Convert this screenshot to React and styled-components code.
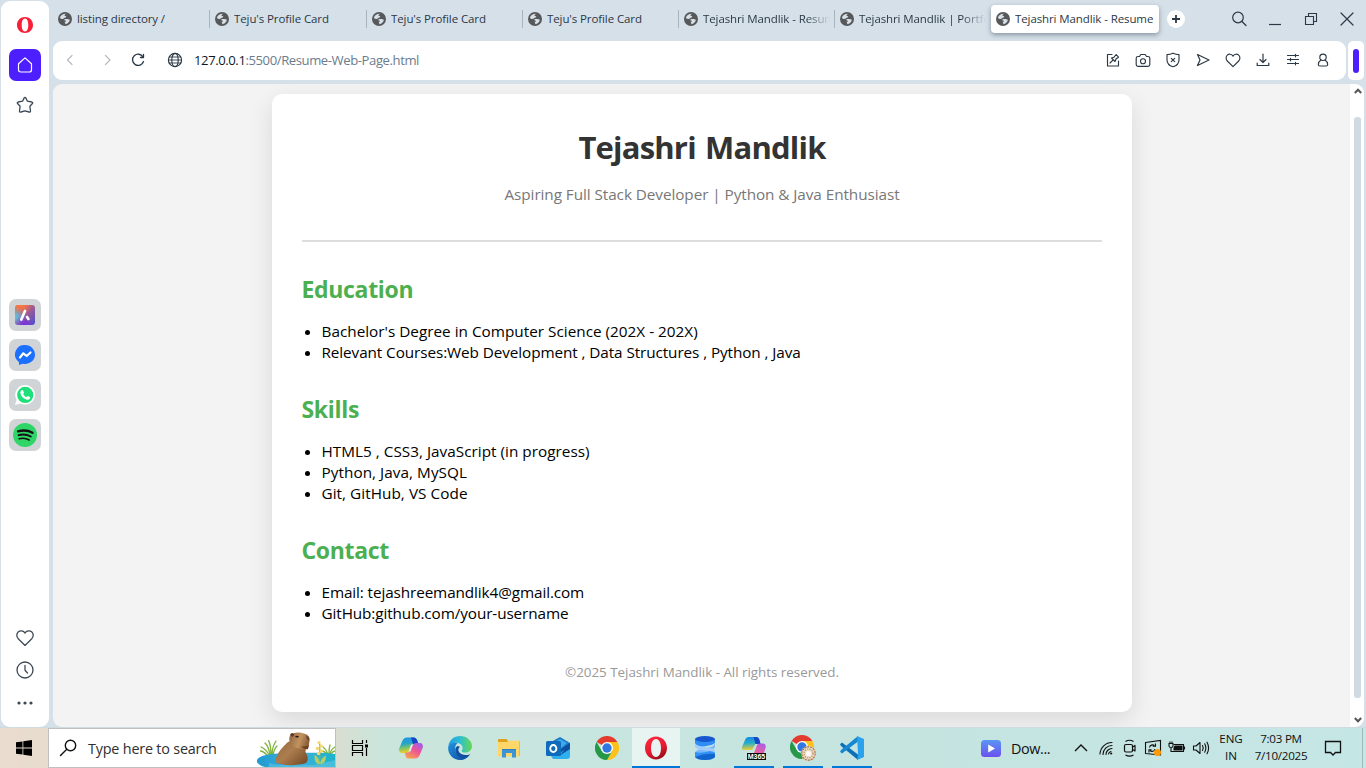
import React from 'react';
import styled, { createGlobalStyle, css } from 'styled-components';

const Global = createGlobalStyle`
  *, *::before, *::after { box-sizing: border-box; }
  html, body { margin: 0; padding: 0; }
  body {
    font-family: 'Open Sans', 'Noto Sans', sans-serif;
    overflow: hidden;
  }
  svg { display: block; flex: none; }
`;

const Desktop = styled.div`
  width: 1366px;
  height: 768px;
  display: flex;
  flex-direction: column;
  overflow: hidden;
`;

/* ---------- Browser shell ---------- */

const Browser = styled.div`
  height: 727px;
  flex: none;
  display: flex;
  background: #d6e0e9;
`;

const Sidebar = styled.nav`
  width: 48px;
  margin: 1px 4px 0 1px;
  padding: 8px 0 14px;
  display: flex;
  flex-direction: column;
  align-items: center;
  justify-content: space-between;
  background: #fff;
  border-radius: 9px;
  color: #3c4955;
`;

const SideGroup = styled.div`
  display: flex;
  flex-direction: column;
  gap: ${(p) => p.$gap || 8}px;
`;

const SideButton = styled.div`
  width: 32px;
  height: ${(p) => p.$h || 32}px;
  border-radius: 7px;
  display: flex;
  align-items: center;
  justify-content: center;
  background: ${(p) => p.$bg || 'transparent'};
`;

const Main = styled.div`
  flex: 1;
  min-width: 0;
  display: flex;
  flex-direction: column;
`;

const TabStrip = styled.div`
  height: 41px;
  display: flex;
  align-items: flex-start;
  padding-top: 5px;
  color: #2b3845;
`;

const Tab = styled.div`
  width: ${(p) => p.$w}px;
  height: 28px;
  display: flex;
  align-items: center;
  gap: 5px;
  padding: 0 5px;
  font-size: 11.5px;
  letter-spacing: -0.1px;
  white-space: nowrap;
  ${(p) => p.$active && css`
    width: 168px;
    margin-left: 1px;
    background: #fff;
    border-radius: 4px;
    box-shadow: 0 2px 5px rgba(40, 55, 70, 0.45);
  `}
`;

const TabTitle = styled.span`
  flex: 1;
  overflow: hidden;
  padding-bottom: 2px;
  ${(p) => p.$fade && css`
    margin-right: -1px;
    mask-image: linear-gradient(to right, #000 calc(100% - 24px), transparent);
  `}
`;

const TabDivider = styled.span`
  width: 1px;
  height: 18px;
  margin-top: 5px;
  background: #a9b3bc;
`;

const NewTab = styled.div`
  width: 18px;
  height: 18px;
  margin: 5px 0 0 8px;
  border-radius: 50%;
  background: #fff;
  display: flex;
  align-items: center;
  justify-content: center;
`;

const WindowControls = styled.div`
  margin-left: auto;
  padding: 0 11px 0 0;
  height: 28px;
  display: flex;
  align-items: center;
  gap: 20px;
`;

const BarRow = styled.div`
  height: 39px;
  display: flex;
  margin-bottom: 4px;
`;

const AddressBar = styled.div`
  width: 1293px;
  background: #fff;
  border-radius: 9px;
  display: flex;
  align-items: center;
  padding: 0 14px 1px 8px;
  color: #2b3845;
`;

const NavButtons = styled.div`
  display: grid;
  grid-template-columns: 38px 31px 37px 18px;
`;

const Url = styled.div`
  margin-left: 9px;
  font-size: 13.1px;
  letter-spacing: -0.42px;
  color: #6b7c8d;
  b { font-weight: 400; color: #10181f; }
`;

const BarTools = styled.div`
  margin-left: auto;
  display: flex;
  gap: 12px;
`;

const PanelToggle = styled.div`
  width: 16px;
  margin-left: 2px;
  border-radius: 5px;
  background: #fff;
  display: flex;
  align-items: center;
  justify-content: center;
  &::after {
    content: '';
    width: 6px;
    height: 24px;
    border-radius: 3px;
    background: #4d1fff;
  }
`;

const Viewport = styled.div`
  flex: 1;
  display: flex;
  width: 1311px;
  border-radius: 9px;
  overflow: hidden;
  background: #f3f3f3;
`;

const Page = styled.main`
  flex: 1;
  padding: 10px 0 0 1px;
  display: flex;
  justify-content: center;
  align-items: flex-start;
  overflow: hidden;
`;

const Scrollbar = styled.div`
  width: 14px;
  background: #fff;
  display: flex;
  flex-direction: column;
  align-items: center;
  justify-content: space-between;
  padding: 4px 0 4px 1px;
`;

const ScrollThumb = styled.div`
  width: 7px;
  height: 581px;
  margin-top: 23px;
  margin-bottom: auto;
  border-radius: 3px;
  background: #d0dae3;
`;

/* ---------- Résumé page ---------- */

const Card = styled.article`
  width: 860px;
  height: 618px;
  padding: 30px;
  border-radius: 10px;
  background: #fff;
  box-shadow: 0 8px 25px rgba(0, 0, 0, 0.11);
`;

const CardHeader = styled.header`
  height: 118px;
  border-bottom: 2px solid #ddd;
  text-align: center;
  margin-bottom: 31px;
`;

const Name = styled.h1`
  margin: 0;
  padding-top: 2px;
  font-size: 31px;
  line-height: 43px;
  letter-spacing: -0.8px;
  word-spacing: 2px;
  color: #333;
`;

const Tagline = styled.p`
  margin: 15px 0 0;
  font-size: 15.3px;
  line-height: 21px;
  letter-spacing: -0.065px;
  color: #777;
`;

const Section = styled.section`
  margin-bottom: 30px;
`;

const SectionTitle = styled.h2`
  margin: 0 0 16px -0.5px;
  font-size: 23px;
  line-height: 32px;
  letter-spacing: -0.32px;
  color: #4caf50;
`;

const List = styled.ul`
  margin: 0;
  padding-left: 19.5px;
  font-size: 15.3px;
  line-height: 21px;
  color: #000;
`;

const Item = styled.li`
  letter-spacing: ${(p) => p.$ls || 0}px;
`;

const CardFooter = styled.footer`
  margin-top: 39px;
  text-align: center;
  font-size: 13.4px;
  line-height: 19px;
  letter-spacing: -0.02px;
  color: #999;
`;

/* ---------- Taskbar ---------- */

const Taskbar = styled.div`
  height: 41px;
  display: flex;
  border-top: 1px solid #cfdcdf;
  background: linear-gradient(to right, #ebdccf 0, #e6dccd 48px, #d9ddd0 336px, #cae5db 380px, #c7e6df 560px, #c5e4e0 900px, #c4e6e5 1366px);
`;

const Start = styled.div`
  width: 48px;
  display: flex;
  align-items: center;
  justify-content: center;
`;

const SearchBox = styled.div`
  width: 288px;
  border: 1px solid #bfc1c1;
  background: #fff;
  display: flex;
  align-items: center;
  padding-left: 10px;
  gap: 11px;
  font-size: 14.4px;
  letter-spacing: -0.2px;
  color: #303030;
  overflow: hidden;
  svg:last-child { margin-left: auto; }
`;

const Apps = styled.div`
  display: flex;
  padding-left: 3px;
`;

const AppButton = styled.div`
  width: 49px;
  padding: ${(p) => (p.$active ? '0' : '0 5px 0 4px')};
  display: flex;
  position: relative;
  align-items: center;
  justify-content: center;
  ${(p) => p.$active && css`background: #e8f4f2; width: 48px; margin-right: 1px;`}
  &::after {
    content: '';
    display: ${(p) => (p.$active || p.$running ? 'block' : 'none')};
    position: absolute;
    bottom: 0;
    left: ${(p) => (p.$active ? 0 : 4)}px;
    width: ${(p) => (p.$active ? 48 : 40)}px;
    height: 2px;
    background: #0078d7;
  }
`;

const TaskView = styled(Start)``;

const Tray = styled.div`
  margin-left: auto;
  display: flex;
  align-items: center;
  color: #111;
`;

const MediaItem = styled.div`
  display: flex;
  align-items: center;
  gap: 10px;
  font-size: 14.4px;
  letter-spacing: -0.4px;
  margin-right: 21px;
  width: 69px;
  white-space: nowrap;
`;

const TrayIcons = styled.div`
  display: flex;
  gap: 4px;
`;

const Stack = styled.div`
  width: ${(p) => p.$w}px;
  margin-left: ${(p) => p.$ml}px;
  font-size: 11.6px;
  line-height: 17.5px;
  padding-bottom: 2px;
  letter-spacing: ${(p) => p.$ls || 0}px;
  text-align: center;
  white-space: nowrap;
`;

const Notice = styled.div`
  width: 48px;
  margin-left: -2px;
  display: flex;
  justify-content: center;
`;

const ShowDesktop = styled.div`
  width: 4px;
  align-self: stretch;
  margin-left: 5px;
  border-left: 1px solid #9dbab9;
`;

/* ---------- Icons ---------- */

const Line = ({ s = 16, w = 1.2, vb = 16, children, ...rest }) => (
  <svg width={s} height={s} viewBox={`0 0 ${vb} ${vb}`} fill="none" stroke="currentColor" strokeWidth={w} strokeLinecap="round" strokeLinejoin="round" {...rest}>
    {children}
  </svg>
);

const TabGlobe = () => (
  <svg width="14" height="14" viewBox="0 0 14 14">
    <circle cx="7" cy="7" r="7" fill="#56585a" />
    <path d="M2 5.3C2.6 3.5 4 2.3 5.9 1.9L8.2 1.8C7 2.5 6.4 3 6.5 3.7L8 4.2C8.6 4.6 8.1 5.3 7.4 5.4L6.3 6.1L4.9 7L2.6 6.7Z" fill="#d9e1e8" />
    <path d="M6.6 7.1H9.3C10.1 7.2 10.6 7.7 11.6 7.6C12.1 8.6 11 10.5 9.4 11.4L7.2 12.2C7.5 11 6.7 10.7 6.5 9.8C7.6 9.5 8.4 9.3 7.9 8.7L6.4 8.3Z" fill="#d9e1e8" />
  </svg>
);

const OperaMark = () => (
  <svg width="16" height="16" viewBox="0 0 16 16">
    <path fillRule="evenodd" fill="#fa1e36" d="M8 0C12.5 0 16 3.5 16 8S12.5 16 8 16 0 12.5 0 8 3.5 0 8 0ZM8 1.5C5.9 1.5 4.7 4.3 4.7 8S5.9 14.5 8 14.5 11.3 11.7 11.3 8 10.1 1.5 8 1.5Z" />
  </svg>
);

const HeartLine = ({ s = 16, w = 1.1 }) => (
  <Line s={s} w={w}>
    <path d="M8 14.6 2 8.7C.3 6.9.3 4.2 1.9 2.7 3.6 1.1 6.3 1.3 7.6 3.1L8 3.7 8.4 3.1C9.7 1.3 12.4 1.1 14.1 2.7 15.7 4.2 15.7 6.9 14 8.7Z" />
  </Line>
);

const Aria = () => (
  <svg width="20" height="20" viewBox="0 0 20 20">
    <defs>
      <linearGradient id="ar1" x1="0" y1="0" x2="1" y2="1">
        <stop offset="0" stopColor="#f2784b" /><stop offset=".35" stopColor="#b8607e" /><stop offset="1" stopColor="#4b4fd0" />
      </linearGradient>
      <radialGradient id="ar2" cx="0" cy=".6" r=".55">
        <stop offset="0" stopColor="#55c8e8" /><stop offset="1" stopColor="#55c8e8" stopOpacity="0" />
      </radialGradient>
      <radialGradient id="ar3" cx=".45" cy="1" r=".5">
        <stop offset="0" stopColor="#7a2fe0" /><stop offset="1" stopColor="#7a2fe0" stopOpacity="0" />
      </radialGradient>
      <radialGradient id="ar4" cx=".35" cy="0" r=".5">
        <stop offset="0" stopColor="#ff7a3c" /><stop offset="1" stopColor="#ff7a3c" stopOpacity="0" />
      </radialGradient>
    </defs>
    <rect width="20" height="20" rx="3" fill="url(#ar1)" />
    <rect width="20" height="20" rx="3" fill="url(#ar2)" />
    <rect width="20" height="20" rx="3" fill="url(#ar3)" />
    <rect width="20" height="20" rx="3" fill="url(#ar4)" />
    <path d="M6.3 14.5 10 6M12 12l1.4 2" stroke="#fff" strokeWidth="2.7" strokeLinecap="round" />
  </svg>
);

const Messenger = () => (
  <svg width="20" height="20" viewBox="0 0 20 20">
    <path fill="#1c70ff" d="M10 0a10 9.5 0 1 1-2.5 18.7L4 20V17.2A9.5 9.5 0 0 1 10 0Z" />
    <path d="M5 12.5 8.3 8.3 11.7 11 15.5 7.5" stroke="#fff" strokeWidth="2.2" fill="none" strokeLinecap="round" strokeLinejoin="round" />
  </svg>
);

const WhatsApp = () => (
  <svg width="20" height="20" viewBox="0 0 20 20">
    <path fill="#fff" d="M10.2 0a9.8 9.8 0 1 1-4.7 18.4L0 20l1.6-5.3A9.8 9.8 0 0 1 10.2 0Z" />
    <circle cx="10.2" cy="9.9" r="8.1" fill="#1ee07a" />
    <path fill="#fff" d="M6.3 5.6c.5-.7 1.5-.7 1.8 0l.8 1.8c.2.6-.6 1.1-.7 1.5.7 1.5 1.9 2.6 3.4 3.2.5-.2.8-1.2 1.4-1l1.9 1c.5.3.2 1.4-.3 1.9-.8.8-2 .9-3.3.5-3-.9-5.5-3.5-5.9-6.3-.1-1 .3-2 .9-2.6Z" />
  </svg>
);

const Spotify = () => (
  <svg width="24" height="24" viewBox="0 0 24 24">
    <circle cx="12" cy="12" r="12" fill="#2fd566" />
    <g fill="none" stroke="#111" strokeLinecap="round">
      <path d="M5 8.3c5-1.3 10.5-.9 14.5 1.5" strokeWidth="2.3" />
      <path d="M5.6 12.2c4.3-1.2 8.5-.7 12.2 1.3" strokeWidth="1.9" />
      <path d="M6.2 15.8c3.5-1 7-.6 10 1.2" strokeWidth="1.6" />
    </g>
  </svg>
);

const Windows = () => (
  <svg width="16" height="16" viewBox="0 0 16 16">
    <path d="M0 2.3 6.5 1.4V7.6H0ZM7.3 1.3 16 0V7.6H7.3ZM0 8.4H6.5V14.6L0 13.7ZM7.3 8.4H16V16L7.3 14.7Z" fill="#000" />
  </svg>
);

const Capybara = () => (
  <svg width="78" height="38" viewBox="0 0 78 38">
    <defs>
      <linearGradient id="cw" x1="0" x2="1"><stop offset="0" stopColor="#1f9bd0" /><stop offset=".5" stopColor="#3fb0de" /><stop offset="1" stopColor="#1db2cc" /></linearGradient>
      <linearGradient id="cb" x1="0" y1="0" x2="1" y2=".8"><stop offset="0" stopColor="#94683f" /><stop offset=".5" stopColor="#ac7d4e" /><stop offset="1" stopColor="#7a4f2a" /></linearGradient>
      <linearGradient id="ch" x1="0" y1="0" x2="1" y2=".3"><stop offset="0" stopColor="#8f6240" /><stop offset=".6" stopColor="#c1935f" /><stop offset="1" stopColor="#8d5f3a" /></linearGradient>
    </defs>
    <g fill="none" stroke="#7fb23e" strokeWidth="1.3" strokeLinecap="round">
      <path d="M13 26Q12 18 8 14M14 26Q14 16 11.5 11.5M15 26Q15 18 19 12M12 26Q9 20 4 18M16 26Q17 20 20 17M10 26Q6 22 3.5 22" />
      <path d="M71 25Q69 20 66 18M72 25Q72 19 73 16M73 25Q74 20 78 18M70 25Q67 22 65 22M74 25Q76 22 78 22" />
    </g>
    <path d="M0 31C2 26 14 24.5 26 24.5 46 24 68 23 78 25V38H8C3 37-1 34 0 31Z" fill="url(#cw)" />
    <path d="M12 34c8 3 45 4 58-1l8-2v7H12Z" fill="#6fcbe6" opacity=".5" />
    <path d="M18 33C19 27 22 22 26 18 30 14 31 12 35 12L49 17 48.5 23C51 27 51.5 31 49 34 40 37 25 37 18 33Z" fill="url(#cb)" />
    <path d="M32.5 8C33 5.500 34 5 36 4.5 40 3 44 3.5 47 4.5 51 5.500 53 8 52.5 12L51.5 18C50.5 21 46 21 42 19.500 36 18 31 14 32.5 8Z" fill="url(#ch)" />
    <path d="M44 17Q48 18.5 51.8 16L51 20Q47 21 44 17Z" fill="#6b3f22" />
    <path d="M33 5.500Q35 2.500 37.5 5.500L35.5 8Z" fill="#5d3b22" />
    <path d="M38.5 8Q40 7 41.5 8.2" stroke="#24160d" strokeWidth="1.5" fill="none" />
    <path d="M49 6.500Q53 7 52.3 11.500L50 10.5Z" fill="#6a4930" />
    <path d="M62 36Q63.5 26 62.5 14" stroke="#86b155" strokeWidth="1.2" fill="none" />
    <g fill="#f7d76d"><circle cx="62" cy="13.5" r="1.6" /><circle cx="64" cy="17" r="1.8" /><circle cx="60.5" cy="19.5" r="1.8" /><circle cx="64.5" cy="22" r="1.7" /><circle cx="61.5" cy="24.5" r="1.7" /></g>
    <path d="M57.5 26Q62 28 63 35 57 35.5 57.5 26ZM69 26.5Q63.5 29 63 35 69 35 69 26.5Z" fill="#b3cf64" />
  </svg>
);

const Copilot = () => (
  <svg width="24" height="22" viewBox="0 0 24 22">
    <defs>
      <linearGradient id="cp1" x1="0" y1="0" x2=".2" y2="1"><stop offset="0" stopColor="#1d8fe8" /><stop offset=".45" stopColor="#28a6c8" /><stop offset=".7" stopColor="#7ac46a" /><stop offset="1" stopColor="#f4cc22" /></linearGradient>
      <linearGradient id="cp2" x1=".8" y1="0" x2=".2" y2="1"><stop offset="0" stopColor="#a25de8" /><stop offset=".45" stopColor="#ee5596" /><stop offset="1" stopColor="#f9a04d" /></linearGradient>
    </defs>
    <path d="M8 .5H15Q17 .5 18 3L19.5 7H14L10 14Q9 16 6.5 16H3Q-.5 15.5.2 11.5L3.5 3.5Q5 .5 8 .5Z" fill="url(#cp1)" />
    <path d="M12 .5H15Q17 .5 18 3L19.5 7H14Z" fill="#1746c8" />
    <path d="M16 21.5H9Q7 21.5 6.5 18.5L6 15.5H9.5L13.5 8.5Q14.5 6 17 6H21Q24.5 6.5 23.8 10.5L20.5 18.5Q19 21.5 16 21.5Z" fill="url(#cp2)" />
    <path d="M12 7.5h2L11.5 14.5H9.5Z" fill="#d9f0ec" />
  </svg>
);

const Edge = () => (
  <svg width="24" height="24" viewBox="0 0 24 24">
    <defs>
      <linearGradient id="e1" x1="0" y1=".5" x2="1" y2=".5"><stop offset="0" stopColor="#1c9be0" /><stop offset=".5" stopColor="#2fc0d0" /><stop offset="1" stopColor="#68d84e" /></linearGradient>
      <linearGradient id="e2" x1="0" y1="0" x2="1" y2="1"><stop offset="0" stopColor="#2290df" /><stop offset="1" stopColor="#0b4a9c" /></linearGradient>
    </defs>
    <path d="M.3 10C1.5 4 6 0 12 0c7 0 12 5 12 10 0 4-3 6.5-6.5 6.5-3 0-4.2-1.2-3.6-2.1C16 11 13.5 8 10 7 6 6 1.5 8 .3 10Z" fill="url(#e1)" />
    <path d="M.2 11C1 7.5 6 6.2 9.5 7.2 6.5 9 6.3 15 9 18.3 12 22 18 21 22 18.2 20 22 16 24 12 24 5 24-.5 18 .2 11Z" fill="url(#e2)" />
    <path d="M9.5 10C5.5 12 7 19.5 13 21.5 17 22.5 20.5 20 22 18.2 18 20 12 19 10.5 15 10 13 10.8 11.5 12 10.7Z" fill="#134f9f" />
  </svg>
);

const Folder = () => (
  <svg width="22" height="19" viewBox="0 0 22 19">
    <path d="M0 1Q0 0 1 0H8.5L10 2H21Q22 2 22 3V17H0Z" fill="#e0a21b" />
    <path d="M0 3H9L10.5 1.8H21.5V17.5H0Z" fill="#ffd768" />
    <path d="M4 10H18V18.5H14V14H8V18.5H4Z" fill="#3c93d5" />
    <path d="M4 10H18V11H4Z" fill="#2f7fc0" />
  </svg>
);

const Outlook = () => (
  <svg width="24" height="22" viewBox="0 0 24 22">
    <path d="M5 5 14 0 24 6V12L5 14Z" fill="#1878ca" />
    <path d="M8 5.5 14 2 21 6 14 12Z" fill="#3fa8ea" />
    <path d="M24 7V19Q24 22 21 22H7L5 19Z" fill="#2fb0ee" />
    <path d="M24 7V12L13 19 24 7ZM15 12 24 6V9L14 16Z" fill="#0b4f9e" />
    <rect y="4" width="15" height="15" rx="1.5" fill="#0f6cbd" />
    <ellipse cx="7.3" cy="11.5" rx="3.1" ry="3.5" fill="none" stroke="#fff" strokeWidth="1.9" />
  </svg>
);

const Chrome = ({ s = 24, badge }) => (
  <svg width={badge ? 26 : s} height={badge ? 26 : s} viewBox={badge ? '0 0 26 26' : '0 0 24 24'}>
    <path d="M12 12 1.6 6A12 12 0 0 1 22.4 6Z" fill="#e33b2e" />
    <path d="M12 12V6H22.4A12 12 0 0 1 12 24L17.2 15Z" fill="#fcc21b" />
    <path d="M12 12 17.2 15 12 24A12 12 0 0 1 1.6 6L6.8 15Z" fill="#279847" />
    <circle cx="12" cy="12" r="6" fill="#fff" />
    <circle cx="12" cy="12" r="4.7" fill="#2f78e4" />
    {badge && (
      <g>
        <circle cx="18.5" cy="18.5" r="7.4" fill="#ecdcc8" />
        <circle cx="18.5" cy="18.5" r="6.7" fill="none" stroke="#a87748" strokeWidth="1.2" strokeDasharray="2.2 .8" />
        <circle cx="18.5" cy="18.5" r="4.5" fill="none" stroke="#b98a60" strokeWidth="1.2" strokeDasharray="1.2 1.2" />
        <circle cx="18.5" cy="18.5" r="2.6" fill="#fffaf3" />
      </g>
    )}
  </svg>
);

const OperaApp = () => (
  <svg width="24" height="24" viewBox="0 0 24 24">
    <defs>
      <linearGradient id="oa" x1=".2" y1="0" x2=".7" y2="1"><stop offset="0" stopColor="#ff2940" /><stop offset=".6" stopColor="#e11a2f" /><stop offset="1" stopColor="#8e0d15" /></linearGradient>
    </defs>
    <path fillRule="evenodd" fill="url(#oa)" d="M12 .5C18.2 .5 23 5.5 23 12S18.2 23.5 12 23.5 1 18.5 1 12 5.8.5 12 .5ZM12 3C8.8 3 7 7 7 12S8.8 21 12 21 17 17 17 12 15.2 3 12 3Z" />
  </svg>
);

const SqlApp = () => (
  <svg width="20" height="24" viewBox="0 0 20 24">
    <path d="M0 3V8Q1.5 10 6 11L14 9.5Q19 8.5 20 6.5V3Z" fill="#2f8df5" />
    <path d="M0 21V16.5Q1 14 6 13L14 11.5Q19 10.5 20 7V11Q19 13.500 14 14.500Z" fill="#7db8fc" />
    <path d="M0 7V10.500Q1 13 7 14L14 15Q19 16 20 18V14.500Q19 12.500 13 11.500L6 10.300Q1 9.500 0 7Z" fill="#a3cdfd" />
    <path d="M0 16V21Q2 24 10 24 18 24 20 21V17Q19 15.500 14 15Q6 18 0 16Z" fill="#2f92f5" />
    <path d="M0 21Q10 17 20 18V21Q17 24 10 24 3 24 0 21Z" fill="#1264ce" />
    <ellipse cx="10" cy="3" rx="10" ry="3" fill="#1757d0" />
  </svg>
);

const M365 = () => (
  <svg width="26" height="24" viewBox="0 0 26 24">
    <defs>
      <linearGradient id="m1" x1="0" y1="0" x2=".1" y2="1"><stop offset="0" stopColor="#1687e4" /><stop offset=".5" stopColor="#26aecb" /><stop offset="1" stopColor="#e8cc37" /></linearGradient>
      <linearGradient id="m2" x1=".8" y1="0" x2=".2" y2="1"><stop offset="0" stopColor="#a85ce9" /><stop offset="1" stopColor="#f5609b" /></linearGradient>
    </defs>
    <path d="M8 1H15Q17.5 1 18.5 4L19.5 8H14.5L11 14H3Q0 13.5 1 11L4 4Q5 1 8 1Z" fill="url(#m1)" />
    <path d="M12.5 1H15Q17.5 1 18.5 4L19.5 8H14.5Z" fill="#1746c8" />
    <path d="M13 17 16 9Q16.7 7.5 18.5 7.5H22Q25.5 8 24.5 12L23 17Z" fill="url(#m2)" />
    <rect x="6" y="17" width="19" height="7" fill="#0a0a0a" />
    <text x="15.5" y="23" fontFamily="Liberation Sans, sans-serif" fontSize="7" fontWeight="700" fill="#fff" textAnchor="middle">M365</text>
  </svg>
);

const VsCode = () => (
  <svg width="24" height="24" viewBox="0 0 24 24">
    <path d="M0 8.3 2 6.5 18 18.5V24L1 10Z" fill="#0d6fb8" />
    <path d="M0 15.7 2 17.5 18 5.5V0L1 14Z" fill="#1687d2" />
    <path d="M17 0 24 3V21L17 24 18 18Z" fill="#2ba2ee" />
  </svg>
);

const tabs = [
  { title: 'listing directory /', w: 156 },
  { title: "Teju's Profile Card", w: 156 },
  { title: "Teju's Profile Card", w: 155 },
  { title: "Teju's Profile Card", w: 155 },
  { title: 'Tejashri Mandlik - Resume', w: 155, fade: true },
  { title: 'Tejashri Mandlik | Portfolio', w: 155, fade: true },
];

const sections = [
  {
    title: 'Education',
    items: [
      { text: "Bachelor's Degree in Computer Science (202X - 202X)", ls: 0.01 },
      { text: 'Relevant Courses:Web Development , Data Structures , Python , Java', ls: -0.09 },
    ],
  },
  {
    title: 'Skills',
    items: [
      { text: 'HTML5 , CSS3, JavaScript (in progress)', ls: 0.02 },
      { text: 'Python, Java, MySQL', ls: 0.05 },
      { text: 'Git, GitHub, VS Code', ls: 0.05 },
    ],
  },
  {
    title: 'Contact',
    items: [
      { text: 'Email: tejashreemandlik4@gmail.com', ls: -0.11 },
      { text: 'GitHub:github.com/your-username', ls: -0.1 },
    ],
  },
];

const apps = [
  { icon: <Copilot /> }, { icon: <Edge /> }, { icon: <Folder /> }, { icon: <Outlook /> }, { icon: <Chrome /> },
  { icon: <OperaApp />, active: true }, { icon: <SqlApp /> }, { icon: <M365 />, running: true },
  { icon: <Chrome badge />, running: true }, { icon: <VsCode />, running: true },
];

export default function App() {
  return (
    <Desktop>
      <Global />
      <Browser>
        <Sidebar>
          <SideGroup>
            <SideButton><OperaMark /></SideButton>
            <SideButton $bg="#4d1fff">
              <Line w={1.2} color="#fff"><path d="M1.5 6.8 8 .9 14.5 6.8V12.7Q14.5 15 12.2 15H3.8Q1.5 15 1.5 12.7Z" /></Line>
            </SideButton>
            <SideButton>
              <Line s={18} vb={18} w={1.3}><path d="M9 1.3Q9.5 1.3 9.8 1.9L11.4 5.2 15.9 6Q17.3 6.5 16.4 7.5L13.9 10.3 14.5 15Q14.5 16.5 13 16L9 14.9 5 16Q3.5 16.5 3.5 15L4.1 10.3 1.6 7.5Q.7 6.5 2.1 6L6.6 5.2 8.2 1.9Q8.5 1.3 9 1.3Z" /></Line>
            </SideButton>
          </SideGroup>
          <SideGroup>
            <SideButton $bg="#d0d4d7"><Aria /></SideButton>
            <SideButton $bg="#d0d4d7"><Messenger /></SideButton>
            <SideButton $bg="#d0d4d7"><WhatsApp /></SideButton>
            <SideButton $bg="#d0d4d7"><Spotify /></SideButton>
          </SideGroup>
          <SideGroup $gap={14}>
            <SideButton $h={18}><HeartLine s={18} w={1.15} /></SideButton>
            <SideButton $h={18}><Line s={18} vb={18} w={1.3}><circle cx="9" cy="9" r="8" /><path d="M9 4.5V9.3L11.5 12" /></Line></SideButton>
            <SideButton $h={20}><svg width="16" height="4" viewBox="0 0 16 4" fill="currentColor"><circle cx="2" cy="2" r="1.6" /><circle cx="8" cy="2" r="1.6" /><circle cx="14" cy="2" r="1.6" /></svg></SideButton>
          </SideGroup>
        </Sidebar>

        <Main>
          <TabStrip>
            {tabs.map((t, i) => (
              <React.Fragment key={i}>
                {i > 0 && <TabDivider />}
                <Tab $w={t.w}><TabGlobe /><TabTitle $fade={t.fade}>{t.title}</TabTitle></Tab>
              </React.Fragment>
            ))}
            <Tab $active><TabGlobe /><TabTitle>Tejashri Mandlik - Resume</TabTitle></Tab>
            <NewTab><Line s={8} vb={8} w={1.8} strokeLinecap="butt"><path d="M4 0V8M0 4H8" /></Line></NewTab>
            <WindowControls>
              <Line w={1.2}><circle cx="7" cy="6.5" r="5.3" /><path d="M11 10.5 15 14.5" /></Line>
              <Line w={1.2} strokeLinecap="butt"><path d="M2 13.5H14" /></Line>
              <Line w={1.1} strokeLinejoin="miter"><path d="M2.5 5.5H10.5V13.5H2.5ZM5.5 5.5V2.5H13.5V10.5H10.5" /></Line>
              <Line w={1.2}><path d="M2 2 14 14M14 2 2 14" /></Line>
            </WindowControls>
          </TabStrip>

          <BarRow>
            <AddressBar>
              <NavButtons>
                <Line color="#b6bbc0" w={1.2}><path d="M11 3.5 6.5 8 11 12.5" /></Line>
                <Line color="#b6bbc0" w={1.2}><path d="M6.5 3.5 11 8 6.5 12.5" /></Line>
                <Line w={1.3}><path d="M13 5A5.6 5.6 0 1 0 13.5 9.5M13.5 2.5V5.5H10.5" /></Line>
                <Line w={1.15}><circle cx="8" cy="8" r="6.6" /><ellipse cx="8" cy="8" rx="3.2" ry="6.6" /><path d="M2.2 5H13.8M2.2 11H13.8M1.4 8H14.6" strokeWidth=".9" /></Line>
              </NavButtons>
              <Url><b>127.0.0.1</b>:5500/Resume-Web-Page.html</Url>
              <BarTools>
                <Line s={18} vb={18} w={1.15}><path d="M8 3.5H3.5V15H14.5V10M6 12 9.2 8.8M7.5 7 11 10.5 12 8 14.5 6.2 12.2 3.5 10 6.2Z" /></Line>
                <Line s={18} vb={18} w={1.15}><path d="M4 5.5H5.5L6.8 3.5H11.2L12.5 5.5H14Q15.8 5.5 15.8 7.3V13.5Q15.8 15.3 14 15.3H4Q2.2 15.3 2.2 13.5V7.3Q2.2 5.5 4 5.5Z" /><circle cx="9" cy="10.2" r="2.5" /></Line>
                <Line s={18} vb={18} w={1.15}><path d="M9 2.2C11 3.2 13 3.6 15 3.6V9C15 12.3 12.5 14.7 9 15.8 5.5 14.7 3 12.3 3 9V3.6C5 3.6 7 3.2 9 2.2ZM7.3 7.3 10.7 10.7M10.7 7.3 7.3 10.7" /></Line>
                <Line s={18} vb={18} w={1.2}><path d="M3.5 3.5 15 9 3.5 14.5 6 9Z" /></Line>
                <Line s={18} vb={18} w={1.15}><path d="M9 15.6 3.3 10C1.7 8.4 1.7 5.700 3.300 4.200 4.900 2.700 7.400 2.900 8.600 4.600L9 5.200 9.400 4.600C10.600 2.900 13.100 2.700 14.700 4.200 16.300 5.700 16.300 8.400 14.700 10Z" /></Line>
                <Line s={18} vb={18} w={1.2}><path d="M9 3V11M6 8.5 9 11.5 12 8.5M3.2 12V14.5H14.8V12" /></Line>
                <Line s={18} vb={18} w={1.15}><path d="M3.5 4.5H14.5M3.5 8.5H14.5M3.5 12.5H14.5M11.5 3.2V5.8M6.5 7.2V9.8M11.5 11.2V13.8" /></Line>
                <Line s={18} vb={18} w={1.15}><circle cx="9" cy="6.3" r="3.2" /><path d="M7 9C5 10.3 4.3 11.8 4.3 13.5Q4.3 15 6 15H12Q13.7 15 13.7 13.5C13.7 11.8 13 10.3 11 9" /></Line>
              </BarTools>
            </AddressBar>
            <PanelToggle />
          </BarRow>

          <Viewport>
            <Page>
              <Card>
                <CardHeader>
                  <Name>Tejashri Mandlik</Name>
                  <Tagline>Aspiring Full Stack Developer | Python &amp; Java Enthusiast</Tagline>
                </CardHeader>
                {sections.map((s) => (
                  <Section key={s.title}>
                    <SectionTitle>{s.title}</SectionTitle>
                    <List>{s.items.map((t) => <Item key={t.text} $ls={t.ls}>{t.text}</Item>)}</List>
                  </Section>
                ))}
                <CardFooter>©2025 Tejashri Mandlik - All rights reserved.</CardFooter>
              </Card>
            </Page>
            <Scrollbar>
              <svg width="8" height="6" viewBox="0 0 8 6"><path d="M.8 5 4 1.7 7.2 5" fill="none" stroke="#555" strokeWidth="2" /></svg>
              <ScrollThumb />
              <svg width="8" height="6" viewBox="0 0 8 6"><path d="M.8 1 4 4.3 7.2 1" fill="none" stroke="#555" strokeWidth="2" /></svg>
            </Scrollbar>
          </Viewport>
        </Main>
      </Browser>

      <Taskbar>
        <Start><Windows /></Start>
        <SearchBox>
          <Line s={18} vb={18} w={1.4} color="#111"><circle cx="11.5" cy="6.5" r="5.2" /><path d="M7.8 10.2 1.5 16.5" /></Line>
          <span>Type here to search</span>
          <Capybara />
        </SearchBox>
        <TaskView>
          <svg width="18" height="16" viewBox="0 0 18 16" fill="none" stroke="#000" strokeWidth="1.2">
            <path d="M1.5 0V3.5H11.5V0M1.5 16V12.5H11.5V16M1.5 5.5H11.5V10.5H1.5ZM15.5 0V3M15.5 8V16" />
            <rect x="14" y="4.5" width="3" height="3" fill="#000" stroke="none" />
          </svg>
        </TaskView>
        <Apps>
          {apps.map((a, i) => <AppButton key={i} $active={a.active} $running={a.running}>{a.icon}</AppButton>)}
        </Apps>
        <Tray>
          <MediaItem>
            <svg width="20" height="17" viewBox="0 0 20 17">
              <defs><linearGradient id="pl" x1="0" y1="0" x2="0" y2="1"><stop offset="0" stopColor="#5b95f6" /><stop offset="1" stopColor="#6a50ee" /></linearGradient></defs>
              <rect width="20" height="17" rx="3.5" fill="url(#pl)" /><path d="M7.2 4.5 14 8.5 7.2 12.5Z" fill="#fff" />
            </svg>
            Dow...
          </MediaItem>
          <TrayIcons>
            <Line s={20} vb={20} w={1.4} strokeLinecap="butt" strokeLinejoin="miter"><path d="M4 13 10 7 16 13" /></Line>
            <Line s={20} vb={20} w={1.1}><path d="M5 16A12 12 0 0 1 17 4.5M8 16.5A9 9 0 0 1 17 7.5M11 16.5A6 6 0 0 1 17 10.5" /><path d="M13.5 16A3 3 0 0 1 16 13.5" /><circle cx="16.2" cy="15.5" r="1.1" fill="currentColor" stroke="none" /></Line>
            <Line s={20} vb={20} w={1.2} strokeLinecap="butt"><rect x="5.5" y="6.5" width="8" height="7.5" rx="1.5" /><path d="M13.5 9 16 7.5V13L13.5 11.5M6.5 3.5Q10.5 1 14.5 3.5M6.5 17Q10.5 19.3 14.5 17" /></Line>
            <svg width="20" height="20" viewBox="0 0 20 20" fill="none" stroke="#111" strokeWidth="1.1">
              <path d="M2.5 4.5 17.5 2.5V17L2.5 15.5M2.5 4V16M6.5 9.5A3.2 3.2 0 0 1 11.5 7.5M12.5 5.5V8.3H9.7M12 11A3 3 0 0 1 7 12.5M6 14.5V11.8H8.5" />
              <circle cx="14.5" cy="14.5" r="3.5" fill="#ff9a08" stroke="none" />
            </svg>
            <svg width="20" height="20" viewBox="0 0 20 20" fill="none" stroke="#111" strokeWidth="1.1">
              <path d="M6.5 6.5H16.5V13.5H5.5M17.5 8.5V11.5" /><path d="M8 8H15V12H7V10Z" fill="#111" /><path d="M2 5.5H6V8Q6 9.5 4 9.5 2 9.5 2 8ZM3 3.5V5.5M5 3.5V5.5M4 9.5V13.5H6" />
            </svg>
            <Line s={20} vb={20} w={1.1}><path d="M2.5 8H5L9 4.5V15.5L5 12H2.5ZM11.5 7.5Q13 10 11.5 12.5M13.7 5.8Q16 10 13.7 14.2M16 4.2Q19.2 10 16 15.8" /></Line>
          </TrayIcons>
          <Stack $w={30} $ml={5}>ENG<br />IN</Stack>
          <Stack $w={60} $ml={5} $ls={-0.25}>7:03 PM<br />7/10/2025</Stack>
          <Notice><Line s={18} vb={18} w={1.3} strokeLinejoin="miter"><path d="M1.5 2.5H16.5V13.5H11.5L9 16 6.5 13.5H1.5Z" /></Line></Notice>
          <ShowDesktop />
        </Tray>
      </Taskbar>
    </Desktop>
  );
}
